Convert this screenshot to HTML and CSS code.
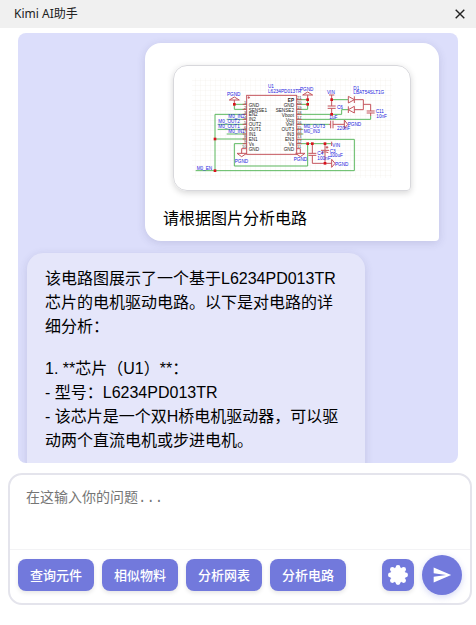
FILE: index.html
```html
<!DOCTYPE html>
<html lang="zh-CN">
<head>
<meta charset="utf-8">
<meta name="viewport" content="width=device-width, initial-scale=1">
<title>Kimi AI助手</title>
<link rel="stylesheet" href="styles.css">
</head>
<body>
<header class="titlebar">
  <h1 class="title">Kimi AI助手</h1>
  <button class="close" type="button" aria-label="关闭">
    <svg width="10" height="10" viewBox="0 0 10 10"><path d="M.7.7 9.3 9.3M9.3.7.7 9.3" stroke="#222" stroke-width="1.4"/></svg>
  </button>
</header>

<main class="chat">
  <article class="bubble user">
    <figure class="card">
      <svg class="circuit" viewBox="81 54 600 300" role="img" aria-label="电路图">
        <defs>
          <pattern id="grid" width="15" height="15" patternUnits="userSpaceOnUse"><path d="M15 0H0V15" fill="none" stroke="#f3f1ea" stroke-width="2"/></pattern>
        </defs>
        <rect x="81" y="54" width="600" height="300" fill="url(#grid)"/>
        <g class="wire">
          <path d="M245 133H208V148H245M245 163H150V332M150 237H245M185 178H245M158 193H245M158 208H245M185 222H245"/>
          <path d="M245 251H208V318H428V251M92 332H568V238H395M395 251H500"/>
          <path d="M395 119H428M395 133H428M395 148H428V119M395 163H530V149H550M500 119H550M395 178H617V167M395 193H492M395 208H415M395 222H415"/>
        </g>
        <g class="part">
          <rect x="245" y="106" width="150" height="177"/>
          <path d="M251 109v7M248 113h7M208 133V120M193 120H223L208 111ZM233 133H245M233 148H245M233 163H245M233 178H245M233 193H245M233 208H245M233 222H245M233 237H245M233 251H245M245 266H230V280M216 280H245L230 290Z"/>
          <path d="M395 119H410M395 133H410M395 148H410M395 163H410M395 178H410M395 193H410M395 208H410M395 222H410M395 238H410M395 251H410M395 266H406V280M392 280H420L406 290Z"/>
          <path d="M428 119V105M413 105H443L428 96ZM500 119V105M492 105H508M500 119V138M488 138H512M488 145H512M500 145V163"/>
          <path d="M550 119V109L568 119 550 129V119M568 109V129M568 119H595V149H568M568 139V159L550 149ZM550 139V159M595 133H617V153M605 153H629M605 159H629M617 159V168"/>
          <path d="M492 193H497M497 182V205M504 182V205M504 193H538M538 180V206L548 193Z"/>
          <path d="M442 251V280M430 280H454M430 286H454M442 286V310H500M480 251V271M468 271H492M470 278Q480 272 490 278M480 276V310M500 298V322L510 310ZM500 245V258M482 262H490M486 258V266"/>
        </g>
        <g fill="#d9121c"><rect x="204" y="129" width="8" height="8"/><rect x="146" y="233" width="8" height="8"/><rect x="146" y="328" width="8" height="8"/><rect x="424" y="115" width="8" height="8"/><rect x="424" y="129" width="8" height="8"/><rect x="496" y="115" width="8" height="8"/><rect x="496" y="159" width="8" height="8"/><rect x="424" y="247" width="8" height="8"/><rect x="438" y="247" width="8" height="8"/><rect x="476" y="247" width="8" height="8"/><rect x="476" y="306" width="8" height="8"/></g>
        <g class="pin">
          <text x="251" y="140">GND</text><text x="251" y="155">SENSE1</text><text x="251" y="169">EN2</text><text x="251" y="184">IN2</text><text x="251" y="199">OUT2</text><text x="251" y="214">OUT1</text><text x="251" y="228">IN1</text><text x="251" y="243">EN1</text><text x="251" y="258">Vs</text><text x="251" y="273">GND</text>
        </g>
        <g class="pin right">
          <text x="387" y="126" font-weight="bold">EP</text><text x="387" y="140">GND</text><text x="387" y="155">SENSE2</text><text x="387" y="170">Vboot</text><text x="387" y="185">Vcp</text><text x="387" y="199">Vref</text><text x="387" y="214">OUT3</text><text x="387" y="228">IN3</text><text x="387" y="243">EN3</text><text x="387" y="258">Vs</text><text x="387" y="273">GND</text>
        </g>
        <g class="number">
          <text x="396" y="117">21</text><text x="396" y="132">20</text><text x="396" y="147">19</text><text x="396" y="161">18</text><text x="396" y="176">17</text><text x="396" y="191">16</text><text x="396" y="206">15</text><text x="396" y="220">14</text><text x="396" y="235">13</text><text x="396" y="249">12</text><text x="396" y="264">11</text>
          <text x="237" y="131">1</text><text x="237" y="146">2</text><text x="237" y="161">3</text><text x="237" y="176">4</text><text x="237" y="191">5</text><text x="237" y="206">6</text><text x="237" y="220">7</text><text x="237" y="235">8</text><text x="237" y="249">9</text><text x="231" y="264">10</text>
        </g>
        <g class="net">
          <text x="186" y="107">PGND</text><text x="190" y="174">M0_IN2</text><text x="160" y="190">M0_OUT2</text><text x="160" y="205">M0_OUT1</text><text x="190" y="220">M0_IN1</text><text x="209" y="308">PGND</text><text x="95" y="330">M0_EN</text>
          <text x="309" y="84">U1</text><text x="309" y="98">L6234PD013TR</text><text x="405" y="93">PGND</text><text x="486" y="102">VIN</text><text x="565" y="90">D1</text><text x="565" y="103">LBAT54SLT1G</text><text x="516" y="146">C6</text><text x="493" y="178">1uF</text><text x="632" y="160">C11</text><text x="634" y="173">10nF</text><text x="548" y="199">PGND</text><text x="516" y="211">220nF</text><text x="416" y="205">M0_OUT3</text><text x="416" y="219">M0_IN3</text><text x="502" y="261">VIN</text><text x="386" y="304">PGND</text><text x="457" y="286">C4</text><text x="457" y="299">100nF</text><text x="494" y="278">C3</text><text x="494" y="291">100uF</text><text x="510" y="318">PGND</text>
        </g>
      </svg>
    </figure>
    <p>请根据图片分析电路</p>
  </article>
  <article class="bubble bot">
    <p>该电路图展示了一个基于L6234PD013TR芯片的电机驱动电路。以下是对电路的详细分析：</p>
    <p>1. **芯片（U1）**：<br>- 型号：L6234PD013TR<br>- 该芯片是一个双H桥电机驱动器，可以驱动两个直流电机或步进电机。</p>
  </article>
</main>

<form class="composer">
  <textarea class="question" aria-label="问题" placeholder="在这输入你的问题..."></textarea>
  <div class="toolbar">
    <button class="action" type="button">查询元件</button>
    <button class="action" type="button">相似物料</button>
    <button class="action" type="button">分析网表</button>
    <button class="action" type="button">分析电路</button>
    <button class="settings" type="button" aria-label="设置">
      <svg width="20" height="20" viewBox="-10 -10 20 20" fill="#fff"><circle r="7.8"/><circle cy="-7.6" r="2.4"/><circle cy="7.6" r="2.4"/><circle cx="-7.6" r="2.4"/><circle cx="7.6" r="2.4"/><circle cx="5.6" cy="5.6" r="2.4"/><circle cx="-5.6" cy="5.6" r="2.4"/><circle cx="5.6" cy="-5.6" r="2.4"/><circle cx="-5.6" cy="-5.6" r="2.4"/></svg>
    </button>
    <button class="send" type="submit" aria-label="发送">
      <svg width="20" height="20" viewBox="0 0 24 24" fill="#fff"><path d="M2 21 23 12 2 3V10L17 12 2 14Z"/></svg>
    </button>
  </div>
</form>

<svg class="watermark" aria-hidden="true">
  <text transform="translate(-22 42) rotate(-44)">2025-06-04</text>
  <text transform="translate(66 130) rotate(-44)">2025-06-04</text>
  <text transform="translate(153 218) rotate(-44)">2025-06-04</text>
  <text transform="translate(240 306) rotate(-44)">2025-06-04</text>
  <text transform="translate(327 394) rotate(-44)">2025-06-04</text>
  <text transform="translate(414 482) rotate(-44)">2025-06-04</text>
  <text transform="translate(-62 607) rotate(-44)">2025-06-04</text>
  <text transform="translate(163 38) rotate(-44)">11:30</text>
  <text transform="translate(250 126) rotate(-44)">11:30</text>
  <text transform="translate(337 214) rotate(-44)">11:30</text>
  <text transform="translate(424 302) rotate(-44)">11:30</text>
  <text transform="translate(38 515) rotate(-44)">11:30</text>
  <text transform="translate(125 603) rotate(-44)">11:30</text>
  <text transform="translate(67 306) rotate(-44)">zouyuxuan</text>
  <text transform="translate(154 394) rotate(-44)">zouyuxuan</text>
  <text transform="translate(241 482) rotate(-44)">zouyuxuan</text>
  <text transform="translate(328 570) rotate(-44)">zouyuxuan</text>
  <text transform="translate(415 658) rotate(-44)">zouyuxuan</text>
</svg>
</body>
</html>
```
FILE: styles.css
```css
* { box-sizing: border-box; }

body {
  margin: 0;
  height: 100vh;
  display: flex;
  flex-direction: column;
  overflow: hidden;
  background: #fff;
  color: #000;
  font: 16px/24px "Liberation Sans", "Noto Sans CJK SC", sans-serif;
}

button {
  border: 0;
  padding: 0;
  color: #fff;
  background: #7279dc;
  cursor: pointer;
}

button svg { display: block; }

.titlebar {
  flex: none;
  display: flex;
  align-items: center;
  justify-content: space-between;
  height: 28px;
  padding: 0 11px 0 14px;
  background: #f0f0f0;
}

.title {
  margin: 0;
  color: #222;
  font: 12px/28px "Noto Sans", "Noto Sans CJK SC", sans-serif;
}

.close { background: none; }

.chat {
  flex: 1;
  min-height: 0;
  display: flex;
  flex-direction: column;
  gap: 12px;
  margin: 5px 18px 10px;
  padding: 10px 19px 0 9px;
  overflow: hidden;
  border-radius: 8px;
  background: #dcdefb;
}

.bubble {
  flex: none;
  padding: 14px 18px 10px;
  box-shadow: 0 2px 8px rgba(60, 60, 120, 0.16);
}

.bubble p { margin: 0; }
.bubble p + p { margin-top: 18px; }

.user {
  align-self: flex-end;
  border-radius: 16px 16px 4px 16px;
  background: #fff;
}

.bot {
  align-self: flex-start;
  max-width: 82%;
  padding-bottom: 32px;
  border-radius: 16px 16px 16px 4px;
  background: #e5e6fa;
}

.card {
  margin: 8px 10px 16px;
  padding: 12px 18px;
  border: 1px solid #d8d8dc;
  border-radius: 14px 14px 4px 14px;
  box-shadow: 0 2px 6px rgba(0, 0, 0, 0.16);
}

.circuit {
  display: block;
  width: 200px;
  height: 100px;
  font-family: "Liberation Sans", sans-serif;
}

.wire { fill: none; stroke: #5cb85f; stroke-width: 3; }
.part { fill: none; stroke: #c4545c; stroke-width: 3; }
.pin { fill: #222; font-size: 14px; }
.right { text-anchor: end; }
.number { fill: #444; font-size: 12px; }
.net { fill: #2222e0; font-size: 14px; }

.composer {
  flex: none;
  margin: 0 4px 20px 8px;
  border: 2px solid #e4e4ec;
  border-radius: 14px;
}

.question {
  display: block;
  width: 100%;
  height: 75px;
  padding: 13px 16px 12px;
  border: 0;
  border-bottom: 1px solid #f3f3f5;
  outline: 0;
  resize: none;
  background: none;
  font: 14px/20px "Liberation Mono", "Noto Sans CJK SC", monospace;
}

.question::placeholder { color: #757575; }

.toolbar {
  display: flex;
  align-items: center;
  gap: 8px;
  height: 53px;
  padding: 0 8px 3px;
}

.action {
  height: 32px;
  padding: 0 12px;
  border-radius: 8px;
  box-shadow: 0 2px 4px rgba(0, 0, 0, 0.1);
  font: 500 13px/32px "Noto Sans CJK SC", sans-serif;
}

.settings,
.send {
  display: grid;
  place-items: center;
}

.settings {
  width: 32px;
  height: 32px;
  margin-left: auto;
  border-radius: 8px;
  box-shadow: 0 2px 4px rgba(0, 0, 0, 0.1);
}

.send {
  width: 40px;
  height: 40px;
  border-radius: 50%;
  box-shadow: 0 2px 6px rgba(114, 121, 220, 0.3);
}

.watermark {
  position: absolute;
  inset: 0;
  width: 100%;
  height: 100%;
  pointer-events: none;
  fill: rgba(0, 0, 0, 0.02);
  font: italic 24px "Liberation Serif", serif;
}
```
